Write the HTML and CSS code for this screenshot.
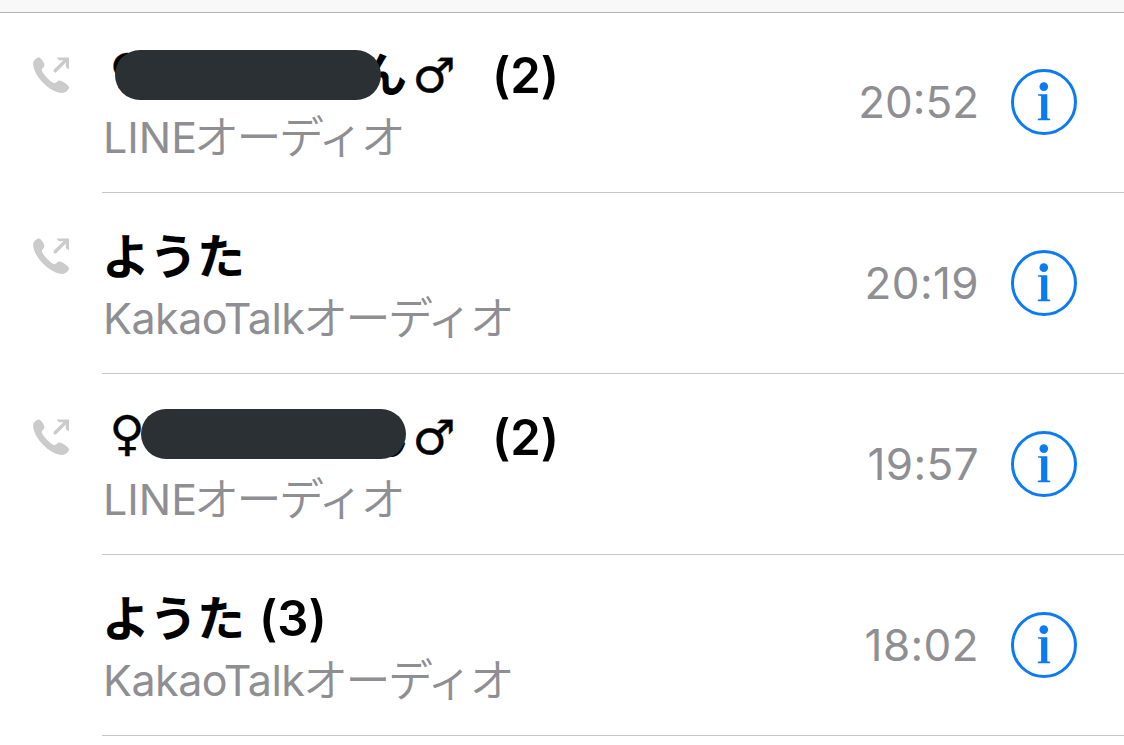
FILE: index.html
```
<!DOCTYPE html>
<html lang="ja">
<head>
<meta charset="utf-8">
<title>履歴</title>
<link rel="stylesheet" href="styles.css">
</head>
<body>
<svg class="defs" width="0" height="0">
  <symbol id="outgoing" viewBox="0 0 40 40">
    <path d="M1.200 7.200C2 5 5 2.200 7 2.400C9 2.600 12.400 7.800 12.400 10.200C12.400 12.400 9.500 13.300 9.800 15.200C10.300 18.300 18 26.800 21.800 28.100C24 28.800 25 26 27 25.500C29.500 24.900 36 29.700 37 32C37.700 34 33.500 38 30.500 38C18 38 0 19.800 1.200 7.200Z" fill="currentColor"/>
    <path d="M23.200 15.800L34.500 4.500" fill="none" stroke="currentColor" stroke-width="3.400" stroke-linecap="round"/>
    <path d="M24.500 2.400H37V14.500L33.800 12V5.300H27Z" fill="currentColor"/>
  </symbol>
  <symbol id="info" viewBox="0 0 66 66">
    <circle class="ring" cx="33" cy="33" r="31.500"/>
    <circle class="solid" cx="32.800" cy="17.600" r="4.300"/>
    <path class="solid" d="M27 25.300H36.300V49.200L39.200 49.700V51.200H26.800V49.700L30.100 49.200V27L27 26.600Z"/>
  </symbol>
</svg>
<header class="topbar"></header>
<main class="list">
  <article class="call first">
    <svg class="out"><use href="#outgoing"/></svg>
    <div class="row">
      <div class="who">
        <div class="name"><span class="sign female">♀</span><span class="kana tail">ん</span><span class="sign male">♂</span><span class="count far">(2)</span><i class="mask mask-a"></i></div>
        <div class="via"><span class="app line">LINE</span><span class="kind">オーディオ</span></div>
      </div>
      <time>20:52</time>
      <svg class="info"><use href="#info"/></svg>
    </div>
  </article>
  <article class="call">
    <svg class="out"><use href="#outgoing"/></svg>
    <div class="row">
      <div class="who">
        <div class="name"><span class="kana">ようた</span></div>
        <div class="via"><span class="app kakao">KakaoTalk</span><span class="kind">オーディオ</span></div>
      </div>
      <time class="wide">20:19</time>
      <svg class="info"><use href="#info"/></svg>
    </div>
  </article>
  <article class="call">
    <svg class="out"><use href="#outgoing"/></svg>
    <div class="row">
      <div class="who">
        <div class="name"><span class="sign female">♀</span><span class="kana tail">ん</span><span class="sign male">♂</span><span class="count far">(2)</span><i class="mask mask-b"></i></div>
        <div class="via"><span class="app line">LINE</span><span class="kind">オーディオ</span></div>
      </div>
      <time class="wide">19:57</time>
      <svg class="info"><use href="#info"/></svg>
    </div>
  </article>
  <article class="call">
    <div class="out"></div>
    <div class="row">
      <div class="who">
        <div class="name"><span class="kana">ようた</span><span class="count near">(3)</span></div>
        <div class="via"><span class="app kakao">KakaoTalk</span><span class="kind">オーディオ</span></div>
      </div>
      <time class="wide">18:02</time>
      <svg class="info"><use href="#info"/></svg>
    </div>
  </article>
</main>
</body>
</html>
```
FILE: styles.css
```
* { box-sizing: border-box; }
body {
  margin: 0;
  background: #fff;
  font-family: Inter, "Noto Sans CJK JP", sans-serif;
  overflow: hidden;
}
.defs { position: absolute; }
.topbar { height: 13px; background: #f8f8f8; border-bottom: 1px solid #b2b2b2; }
.call { display: flex; height: 181px; padding-left: 32px; }
.call.first { height: 180px; }
.call.first .out { margin-top: 42px; }
.call.first .row { padding-top: 0; }
.out { flex: none; width: 40px; height: 40px; margin: 43px 30px 0 0; color: #cbcbcb; }
.row {
  flex: 1;
  display: flex;
  padding-top: 1px;
  border-bottom: 1px solid #c8c7cc;
}
.who { flex: 1; padding: 32px 0 0 1px; }
.name {
  position: relative;
  display: flex;
  height: 62px;
  line-height: 62px;
  font-size: 48px;
  font-weight: 600;
  color: #000;
  white-space: nowrap;
}
.kana {
  width: 144px;
  margin-left: -1px;
  font-family: "Noto Sans CJK JP", sans-serif;
  font-weight: 700;
  line-height: 54px;
  letter-spacing: -0.5px;
}
.sign { width: 48px; font-family: "DejaVu Sans", sans-serif; font-weight: 400; text-align: center; -webkit-text-stroke: 0.4px #000; }
.female { line-height: 52px; }
.kana.tail { width: 48px; margin-left: 208px; line-height: 53px; }
.male { margin-left: 3px; line-height: 60px; }
.count { font-size: 49px; font-feature-settings: "calt" 0; }
.count.far { margin-left: 34px; }
.count.near { margin-left: 13px; }
.mask {
  position: absolute;
  height: 50px;
  border-radius: 25px;
  background: #2b3034;
}
.mask-a { left: 12px; top: 5px; width: 266px; }
.mask-b { left: 38px; top: 2px; width: 265px; }
.via {
  display: flex;
  height: 60px;
  line-height: 60px;
  font-size: 43px;
  color: #8e8e93;
  white-space: nowrap;
}
.app.line { width: 91px; }
.app.kakao { width: 200px; letter-spacing: -0.5px; }
.kind {
  font-family: "Noto Sans CJK JP", sans-serif;
  font-weight: 350;
  font-size: 45px;
  line-height: 55px;
  letter-spacing: -2.500px;
}
time {
  padding-top: 60px;
  line-height: 58px;
  font-size: 44px;
  color: #8e8e93;
  margin-right: 32px;
}
time.wide { letter-spacing: 0.4px; }
.info { width: 66px; height: 66px; margin: 56px 47px 0 0; }
.ring { fill: none; stroke: #0b7bf4; stroke-width: 3; }
.solid { fill: #0b7bf4; }
```
